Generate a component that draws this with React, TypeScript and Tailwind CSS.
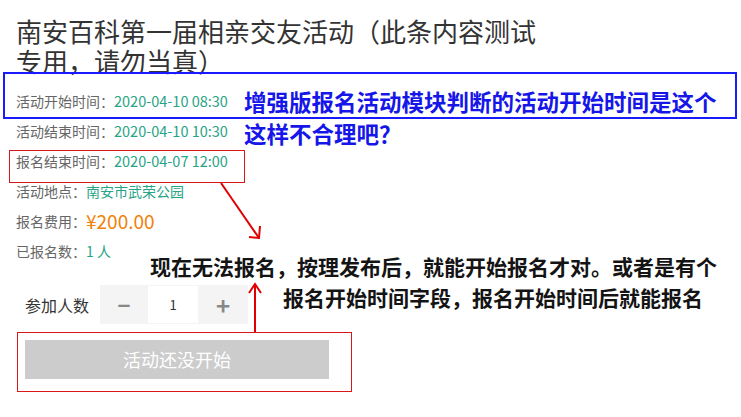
import React from 'react';

const cjk = "font-['Microsoft_YaHei','Noto_Sans_CJK_SC',sans-serif]";

const InfoRow: React.FC<{ label: string; children: React.ReactNode }> = ({ label, children }) => (
    <div className="flex h-[30px] items-center text-[14px]">
        <span className="text-[#666]">{label}</span>
        {children}
    </div>
);

export default function App() {
    return (
        <div className={`relative h-[417px] w-[741px] overflow-hidden bg-white ${cjk}`}>
            {/* page content */}
            <div className="flex flex-col pl-[16px] pt-[16px]">
                <h1 className="max-w-[524px] text-[26px] leading-[30px] font-normal text-[#333]">
                    南安百科第一届相亲交友活动（此条内容测试专用，请勿当真）
                </h1>
                <div className="mt-[10px] flex flex-col">
                    <InfoRow label="活动开始时间：">
                        <span className="text-[14.5px] text-[#27a385]">2020-04-10 08:30</span>
                    </InfoRow>
                    <InfoRow label="活动结束时间：">
                        <span className="text-[14.5px] text-[#27a385]">2020-04-10 10:30</span>
                    </InfoRow>
                    <InfoRow label="报名结束时间：">
                        <span className="text-[14.5px] text-[#27a385]">2020-04-07 12:00</span>
                    </InfoRow>
                    <InfoRow label="活动地点：">
                        <span className="text-[#27a385]">南安市武荣公园</span>
                    </InfoRow>
                    <InfoRow label="报名费用：">
                        <span className="text-[19px] text-[#f0820a]">¥200.00</span>
                    </InfoRow>
                    <InfoRow label="已报名数：">
                        <span className="text-[#27a385]">1 人</span>
                    </InfoRow>
                </div>
                <div className="mt-[19px] flex items-center pl-[9px]">
                    <span className="w-[75px] text-[16px] text-[#333]">参加人数</span>
                    <div className="flex h-[39px] bg-[#f4f4f4]">
                        <button className="flex w-[48px] items-center justify-center text-[22px] font-bold text-[#888]">−</button>
                        <div className="my-[1px] flex w-[50px] items-center justify-center bg-white text-[13px] text-[#333]">1</div>
                        <button className="flex w-[50px] items-center justify-center text-[24px] font-bold text-[#888]">+</button>
                    </div>
                </div>
                <div className="mt-[16px] ml-[9px] flex h-[39px] w-[304px] items-center justify-center bg-[#cccccc] text-[18px] text-white">
                    活动还没开始
                </div>
            </div>

            {/* annotations */}
            <div className="absolute left-[3px] top-[72px] h-[47px] w-[734px] border-2 border-[#1a1aff]" />
            <div className="absolute left-[9px] top-[150px] h-[33px] w-[236px] border border-[#d81818]" />
            <div className="absolute left-[17px] top-[332px] h-[60px] w-[335px] border border-[#d81818]" />

            <div className="absolute left-[244px] top-[85px] text-[22.5px] leading-[32px] font-bold text-[#1616e8]">
                增强版报名活动模块判断的活动开始时间是这个
                <br />
                这样不合理吧？
            </div>

            <div className="absolute left-[150px] top-[251px] text-[21px] leading-[31px] font-bold text-[#141414]">
                现在无法报名，按理发布后，就能开始报名才对。或者是有个
            </div>
            <div className="absolute left-[283px] top-[282px] text-[21px] leading-[31px] font-bold text-[#141414]">
                报名开始时间字段，报名开始时间后就能报名
            </div>

            <svg className="pointer-events-none absolute inset-0" width="741" height="417" viewBox="0 0 741 417">
                <g stroke="#e00000" strokeWidth="2" fill="none">
                    <line x1="221" y1="183" x2="259" y2="238" />
                    <polyline points="249,237 259,238 260,226" />
                    <line x1="255" y1="332" x2="255" y2="284" />
                    <polyline points="249,293 255,284 261,293" />
                </g>
            </svg>
        </div>
    );
}
